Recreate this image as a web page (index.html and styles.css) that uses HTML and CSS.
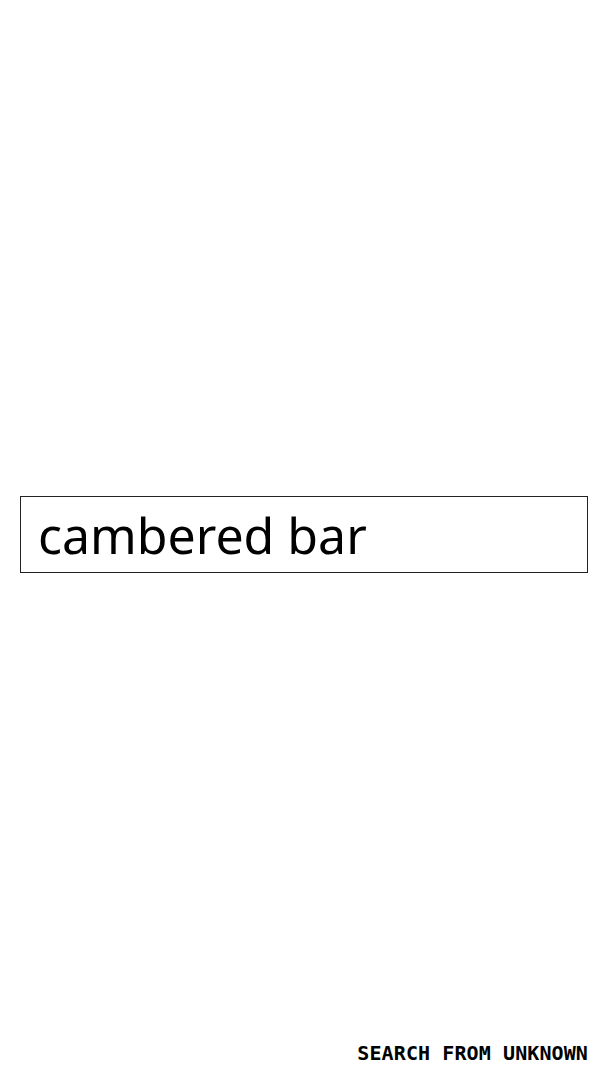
FILE: index.html
```html
<!DOCTYPE html>
<html lang="en">
<head>
    <meta charset="UTF-8">
    <meta name="viewport" content="width=device-width, initial-scale=1.0">
    <title>Search</title>
    <link rel="stylesheet" href="styles.css">
</head>
<body>
    <div class="page">
        <main class="search-area">
            <input type="text" class="search-input" value="cambered bar">
        </main>
        <footer class="footer">SEARCH FROM UNKNOWN</footer>
    </div>
</body>
</html>
```
FILE: styles.css
```css
body {
    margin: 0;
    padding: 0;
    background-color: #fff;
    color: #000;
    font-family: 'Noto Sans', sans-serif;
}
.page {
    display: flex;
    flex-direction: column;
    height: 1080px;
}
.search-area {
    flex: 1;
    display: flex;
    align-items: center;
    padding: 0 20px;
}
.search-input {
    box-sizing: border-box;
    width: 100%;
    height: 77px;
    margin-top: 28px;
    padding: 0 17px;
    border: 1px solid #222;
    border-radius: 0;
    font-family: 'Noto Sans', sans-serif;
    font-size: 50px;
    color: #000;
    outline: none;
}
.footer {
    text-align: right;
    padding: 0 20px 15px;
    font-family: 'DejaVu Sans Mono', monospace;
    font-weight: bold;
    font-size: 20px;
    letter-spacing: 0.1px;
}
```
